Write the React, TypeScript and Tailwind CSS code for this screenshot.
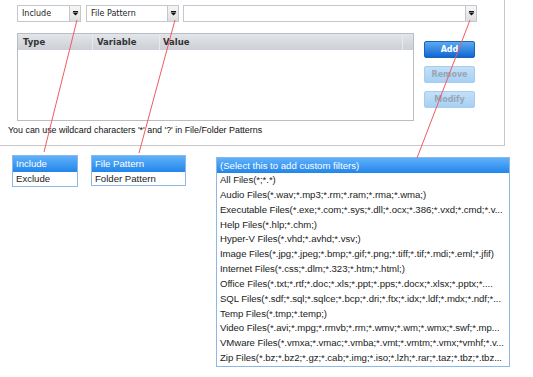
import React from "react";

const filters = [
  "All Files(*;*.*)",
  "Audio Files(*.wav;*.mp3;*.rm;*.ram;*.rma;*.wma;)",
  "Executable Files(*.exe;*.com;*.sys;*.dll;*.ocx;*.386;*.vxd;*.cmd;*.v...",
  "Help Files(*.hlp;*.chm;)",
  "Hyper-V Files(*.vhd;*.avhd;*.vsv;)",
  "Image Files(*.jpg;*.jpeg;*.bmp;*.gif;*.png;*.tiff;*.tif;*.mdi;*.eml;*.jfif)",
  "Internet Files(*.css;*.dlm;*.323;*.htm;*.html;)",
  "Office Files(*.txt;*.rtf;*.doc;*.xls;*.ppt;*.pps;*.docx;*.xlsx;*.pptx;*....",
  "SQL Files(*.sdf;*.sql;*.sqlce;*.bcp;*.dri;*.ftx;*.idx;*.ldf;*.mdx;*.ndf;*...",
  "Temp Files(*.tmp;*.temp;)",
  "Video Files(*.avi;*.mpg;*.rmvb;*.rm;*.wmv;*.wm;*.wmx;*.swf;*.mp...",
  "VMware Files(*.vmxa;*.vmac;*.vmba;*.vmt;*.vmtm;*.vmx;*vmhf;*.v...",
  "Zip Files(*.bz;*.bz2;*.gz;*.cab;*.img;*.iso;*.lzh;*.rar;*.taz;*.tbz;*.tbz...",
];

function Arrow() {
  return (
    <div className="w-[11px] h-full border-l border-[#c4c8ce] bg-gradient-to-b from-[#f7f7f7] to-[#dedede] flex items-center justify-center">
      <svg width="7" height="5" viewBox="0 0 7 5">
        <rect x="1" y="0" width="5" height="1" fill="#111" />
        <path d="M0.5 1.5 H6.5 L3.5 4.5 Z" fill="#111" />
      </svg>
    </div>
  );
}

function Select({ w, label }: { w: string; label: string }) {
  return (
    <div className={`${w} h-[17px] border border-[#c4c8ce] bg-white flex items-stretch`}>
      <div className="flex-1 pl-[4px] text-[8px] leading-[15px] text-[#222] font-['DejaVu_Sans',sans-serif]">
        {label}
      </div>
      <Arrow />
    </div>
  );
}

function Btn({ label, on }: { label: string; on?: boolean }) {
  return (
    <div
      className={
        on
          ? "w-[51px] h-[17px] rounded-[2px] border border-[#1c63c0] bg-gradient-to-b from-[#5aaaf0] to-[#0d66d2] text-white text-[8px] font-bold leading-[15px] text-center font-['DejaVu_Sans',sans-serif]"
          : "w-[51px] h-[17px] rounded-[2px] border border-[#a6cdf0] bg-gradient-to-b from-[#c3e0f8] to-[#a7d0f3] text-[#96a6b4] text-[8px] font-bold leading-[15px] text-center font-['DejaVu_Sans',sans-serif]"
      }
    >
      {label}
    </div>
  );
}

function Sel({ text }: { text: string }) {
  return (
    <div className="h-[16px] bg-gradient-to-b from-[#5eb0fa] to-[#1f86ea] text-white px-[3px] leading-[16px] whitespace-nowrap">
      {text}
    </div>
  );
}

export default function App() {
  return (
    <div className="relative w-[533px] h-[377px] bg-white overflow-hidden font-['Liberation_Sans',Arial,sans-serif]">
      {/* top panel */}
      <div className="w-[505px] h-[146px] border-r border-b border-[#c8c8c8]">
        <div className="flex gap-[5px] pt-[5px] pl-[17px]">
          <Select w="w-[64px]" label="Include" />
          <div className="flex gap-[4px]">
            <Select w="w-[93px]" label="File Pattern" />
            <Select w="w-[294px]" label="" />
          </div>
        </div>

        <div className="flex pl-[17px] pt-[11px] gap-[10px]">
          <div className="w-[397px] h-[88px] border border-[#b9bdc4] bg-white">
            <div className="h-[16px] flex bg-gradient-to-b from-[#e2e5e9] to-[#ccd0d6] text-[8.5px] font-bold text-[#333] leading-[16px] font-['DejaVu_Sans',sans-serif]">
              <div className="w-[75px] pl-[5px] border-r border-[#e8eaed]">Type</div>
              <div className="w-[67px] pl-[4px] border-r border-[#e8eaed]">Variable</div>
              <div className="w-[243px] pl-[3px] border-r border-[#e8eaed]">Value</div>
            </div>
          </div>
          <div className="flex flex-col gap-[8px] pt-[8px]">
            <Btn label="Add" on />
            <Btn label="Remove" />
            <Btn label="Modify" />
          </div>
        </div>

        <div className="pl-[8px] pt-[3px] text-[8.9px] leading-[12px] text-[#111]">
          You can use wildcard characters '*' and '?' in File/Folder Patterns
        </div>
      </div>

      {/* dropdown lists */}
      <div className="flex items-start pt-[9px] text-[9.6px] text-[#222]">
        <div className="ml-[12px] w-[66px] border border-[#8cb8e6] bg-white">
          <Sel text="Include" />
          <div className="h-[14px] px-[3px] leading-[14px]">Exclude</div>
        </div>
        <div className="ml-[13px] w-[95px] border border-[#8cb8e6] bg-white">
          <Sel text="File Pattern" />
          <div className="h-[13px] px-[3px] leading-[13px]">Folder Pattern</div>
        </div>
        <div className="ml-[30px] mt-[2px] w-[294px] border border-[#8cb8e6] bg-white">
          <div className="h-[15px] bg-gradient-to-b from-[#5eb0fa] to-[#1f86ea] text-white px-[3px] leading-[15px] whitespace-nowrap">
            (Select this to add custom filters)
          </div>
          {filters.map((f) => (
            <div
              key={f}
              className="h-[14.85px] leading-[14.85px] pl-[3px] whitespace-nowrap overflow-hidden tracking-[-0.05px]"
            >
              {f}
            </div>
          ))}
        </div>
      </div>

      {/* callout lines */}
      <svg className="absolute inset-0 pointer-events-none" width="533" height="377">
        <line x1="77" y1="20" x2="44" y2="152" stroke="#f05a64" strokeWidth="1" />
        <line x1="175" y1="20" x2="139" y2="153" stroke="#f05a64" strokeWidth="1" />
        <line x1="470" y1="20" x2="417" y2="158" stroke="#f05a64" strokeWidth="1" />
      </svg>
    </div>
  );
}
